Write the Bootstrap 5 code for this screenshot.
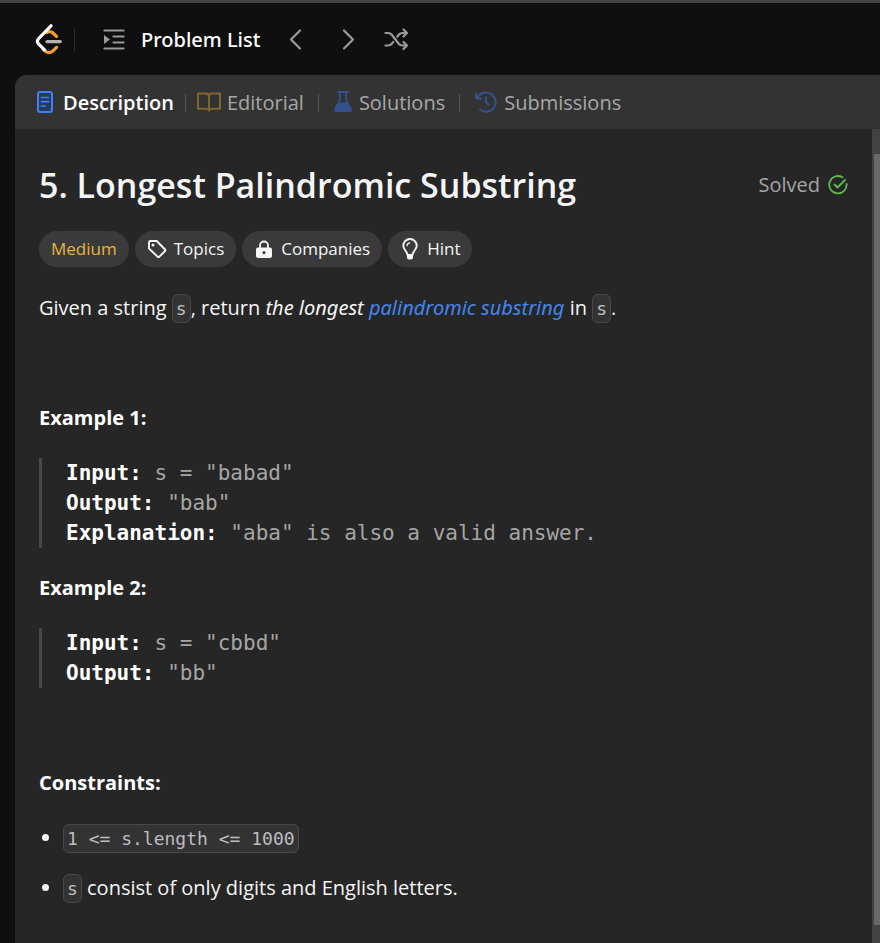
<!DOCTYPE html>
<html lang="en">
<head>
<meta charset="utf-8">
<meta name="viewport" content="width=device-width, initial-scale=1">
<title>Longest Palindromic Substring</title>
<link href="https://cdn.jsdelivr.net/npm/bootstrap@5.3.0/dist/css/bootstrap.min.css" rel="stylesheet">
<style>
  body { background: #0f0f0f; color: #f5f5f5; font-family: "Open Sans", "Noto Sans", sans-serif; font-size: 20px; line-height: 30px; border-top: 3px solid #444; }
  a, a:hover { text-decoration: none; }
  svg { display: block; flex: none; }
  .topbar { height: 72px; padding: 1px 0 0 35px; color: #9a9a9a; }
  .topbar .btn { color: #9a9a9a; }
  .rule-v { width: 1px; height: 24px; background: #2a2a2a; margin: 0 28px 0 11px; }
  .list-link { color: #fff; font-family: "Noto Sans", sans-serif; font-weight: 500; gap: 16px; }
  .panel { margin-left: 15px; background: #262626; border-top-left-radius: 12px; overflow: hidden; }
  .tabs { height: 54px; background: #333; padding: 2px 0 0 21px; }
  .tabs a { color: #a8a8a8; gap: 6px; }
  .tabs a.active { color: #fff; font-weight: 600; gap: 9px; }
  .tabs .tick { width: 1px; height: 18px; background: #555; margin: 0 14px; }
  .tabs .active + .tick { margin: 0 11px; }
  .content { padding: 35px 24px 20px; }
  h1 { font-size: 34px; line-height: 42px; font-weight: 600; }
  .solved { color: #a5a5a5; gap: 8px; line-height: 28px; }
  .pills { gap: 6px; margin: 25px 0 26px; }
  .pills .btn, .pill-level { height: 36px; padding: 0 12px; font-size: 17px; line-height: 36px; background: #3a3a3a; color: #f5f5f5; gap: 7px; }
  .pills .pill-level { color: #e5b53c; }
  .prose p, .prose pre { margin-bottom: 25px; }
  .prose strong { font-weight: 700; color: #fff; }
  .prose em { font-family: "Noto Sans", sans-serif; }
  .prose a { color: #4485ee; }
  .prose pre { border-left: 3px solid #484848; padding-left: 24px; font-family: "DejaVu Sans Mono", monospace; font-size: 21px; line-height: 30px; color: #a5a5a5; overflow: visible; white-space: pre-wrap; }
  .prose code { font-family: "DejaVu Sans Mono", monospace; font-size: 18px; line-height: 20px; color: #bdbdc2; background: #333; border: 1px solid #484848; border-radius: 6px; padding: 3px; }
  .prose ul { padding-left: 24px; }
  .prose li { margin-bottom: 20px; }
  .scroll-rail { width: 8px; background: #424242; padding: 25px 0 18px 2px; }
  .scroll-rail div { background: #686868; }
</style>
<script src="https://cdn.jsdelivr.net/npm/bootstrap@5.3.0/dist/js/bootstrap.bundle.min.js"></script>
</head>
<body class="d-flex flex-column min-vh-100">
<header class="topbar d-flex align-items-center">
  <a href="#" aria-label="Home"><svg width="28" height="32" viewBox="0 0 28 32" fill="none" stroke-linecap="round" stroke-width="3.2">
    <path d="M12 8.500q3-2 6 .5l3.500 3.300M8 25l2.500 2.300q3.500 2.800 7 0l4-3.900" stroke="#f0a030"/>
    <path d="M16 1.800 3.500 14.700q-2.200 2.700 0 5.200l6 6" stroke="#fff"/>
    <path d="M12 17.600h13.300" stroke="#b3b3b3"/></svg></a>
  <div class="rule-v"></div>
  <a href="#" class="list-link d-flex align-items-center"><svg width="22" height="22" viewBox="0 0 22 22" fill="none" stroke="#9a9a9a" stroke-width="2.2" stroke-linecap="round"><path d="M1.500 1.500h19M10.500 7.500h10M10.500 13.500h10M1.500 19.500h19"/><path d="M1 6v9l6-4.500z" fill="#9a9a9a" stroke="none"/></svg>Problem List</a>
  <button class="btn p-0 border-0 ms-4" aria-label="Previous problem"><svg width="24" height="24" viewBox="0 0 24 24" fill="none" stroke="currentColor" stroke-width="2.2" stroke-linecap="round" stroke-linejoin="round"><path d="M16 2.500 7 11.500l9 9"/></svg></button>
  <button class="btn p-0 border-0 ms-4" aria-label="Next problem"><svg width="28" height="24" viewBox="0 0 28 24" fill="none" stroke="currentColor" stroke-width="2.2" stroke-linecap="round" stroke-linejoin="round"><path d="m12 2.500 9 9-9 9"/></svg></button>
  <button class="btn p-0 border-0 ms-4" aria-label="Random problem"><svg width="26" height="24" viewBox="0 0 26 24" fill="none" stroke="currentColor" stroke-width="2.2" stroke-linecap="round" stroke-linejoin="round"><path d="M1.500 5h2.500q2.500 0 4 2l6.500 8.500q1.500 2 4 2h4.500M1.500 17.500h2.500q2.500 0 4-2l1.200-1.700M13.300 8.700 14.500 7q1.500-2 4-2h4.500M19.500 1.500 23 5l-3.500 3.500M19.500 14l3.500 3.500-3.500 3.500"/></svg></button>
</header>
<main class="panel flex-grow-1 d-flex flex-column">
  <nav class="tabs d-flex align-items-center">
    <a href="#" class="active d-flex align-items-center" aria-current="page"><svg width="18" height="24" viewBox="0 0 18 24" fill="none" stroke="#4080f5" stroke-width="2" stroke-linecap="round"><rect x="2" y="1" width="14" height="20" rx="2" fill="#263a60"/><path d="M5.500 6.500h7M5.500 10.700h7M5.500 15h3.500" stroke-width="1.700"/></svg>Description</a>
    <div class="tick"></div>
    <a href="#" class="d-flex align-items-center"><svg width="24" height="22" viewBox="0 0 24 22" fill="none" stroke="#80652e" stroke-width="2" stroke-linejoin="round"><path d="M12 4q0-2.500-3-2.500H1v15.300h8q2 0 3 1.700 1-1.700 3-1.700h8V1.500h-8q-3 0-3 2.500zv14"/></svg>Editorial</a>
    <div class="tick"></div>
    <a href="#" class="d-flex align-items-center"><svg width="20" height="24" viewBox="0 0 20 24"><path d="M5 1h10M7 1.500v7.500L2.500 17M13 1.500v7.500l4.500 8" fill="none" stroke="#36508b" stroke-width="1.800" stroke-linecap="round"/><path d="M5.500 11.500h9l4.200 7q1 2.500-1.700 2.500H3q-2.700 0-1.700-2.500z" fill="#36508b"/></svg>Solutions</a>
    <div class="tick"></div>
    <a href="#" class="d-flex align-items-center"><svg width="24" height="24" viewBox="0 0 24 24" fill="none" stroke="#36508b" stroke-width="2" stroke-linecap="round" stroke-linejoin="round"><path d="M3.500 6.700A9.600 9.600 0 1 1 6 18.500M2 2.500v5h5M12 6v5l3 3"/></svg>Submissions</a>
  </nav>
  <div class="d-flex flex-grow-1">
    <article class="content flex-grow-1">
      <div class="d-flex justify-content-between">
        <h1 class="m-0">5. Longest Palindromic Substring</h1>
        <div class="solved d-flex align-items-center align-self-center">Solved <svg width="20" height="20" viewBox="0 0 20 20" fill="none" stroke="#5fb94b" stroke-width="1.800" stroke-linecap="round" stroke-linejoin="round"><path d="M14.500 2.300A8.700 8.700 0 1 0 18.600 8.800M6.500 9.500l3 3L17 5"/></svg></div>
      </div>
      <div class="pills d-flex flex-wrap">
        <span class="pill-level rounded-pill">Medium</span>
        <button class="btn border-0 rounded-pill d-flex align-items-center"><svg width="20" height="20" viewBox="0 0 20 20" fill="none" stroke="currentColor" stroke-width="1.900" stroke-linejoin="round"><path d="M2 3.500q0-1.500 1.500-1.500h6.300L18 10.500q.7.800 0 1.500l-5.800 5.800q-.8.700-1.500 0L2 9.500z"/><circle cx="6" cy="6" r="1.500" fill="currentColor" stroke="none"/></svg>Topics</button>
        <button class="btn border-0 rounded-pill d-flex align-items-center"><svg width="20" height="20" viewBox="0 0 20 20"><path d="M6 9V6.500a4 4 0 0 1 8 0V9" fill="none" stroke="currentColor" stroke-width="1.800"/><path fill="currentColor" fill-rule="evenodd" d="M4 8.500h12q2 0 2 2V17q0 2-2 2H4q-2 0-2-2v-6.500q0-2 2-2zM10 12a1.600 1.600 0 1 0 0 3.200 1.600 1.600 0 0 0 0-3.200z"/></svg>Companies</button>
        <button class="btn border-0 rounded-pill d-flex align-items-center"><svg width="20" height="22" viewBox="0 0 20 22" fill="none" stroke="currentColor" stroke-width="1.900" stroke-linejoin="round"><path d="M7.500 17c0-4-4.200-5-4.200-9.300a6.700 6.700 0 0 1 13.400 0c0 4.300-4.200 5.300-4.200 9.300z"/><path d="M7 7.700q.3-2.500 2.700-2.900" stroke-width="1.300" stroke-linecap="round"/><path d="M7 17.500h6v2q0 2-2 2H9q-2 0-2-2z" fill="currentColor" stroke="none"/></svg>Hint</button>
      </div>
      <div class="prose">
        <p>Given a string <code>s</code>, return <em>the longest <a href="#">palindromic substring</a></em> in <code>s</code>.</p>
        <p>&nbsp;</p>
        <p><strong>Example 1:</strong></p>
<pre><strong>Input:</strong> s = "babad"
<strong>Output:</strong> "bab"
<strong>Explanation:</strong> "aba" is also a valid answer.</pre>
        <p><strong>Example 2:</strong></p>
<pre><strong>Input:</strong> s = "cbbd"
<strong>Output:</strong> "bb"</pre>
        <p>&nbsp;</p>
        <p><strong>Constraints:</strong></p>
        <ul class="mb-0">
          <li><code>1 &lt;= s.length &lt;= 1000</code></li>
          <li class="mb-0"><code>s</code> consist of only digits and English letters.</li>
        </ul>
      </div>
    </article>
    <div class="scroll-rail d-flex" aria-hidden="true"><div class="flex-grow-1"></div></div>
  </div>
</main>
</body>
</html>
